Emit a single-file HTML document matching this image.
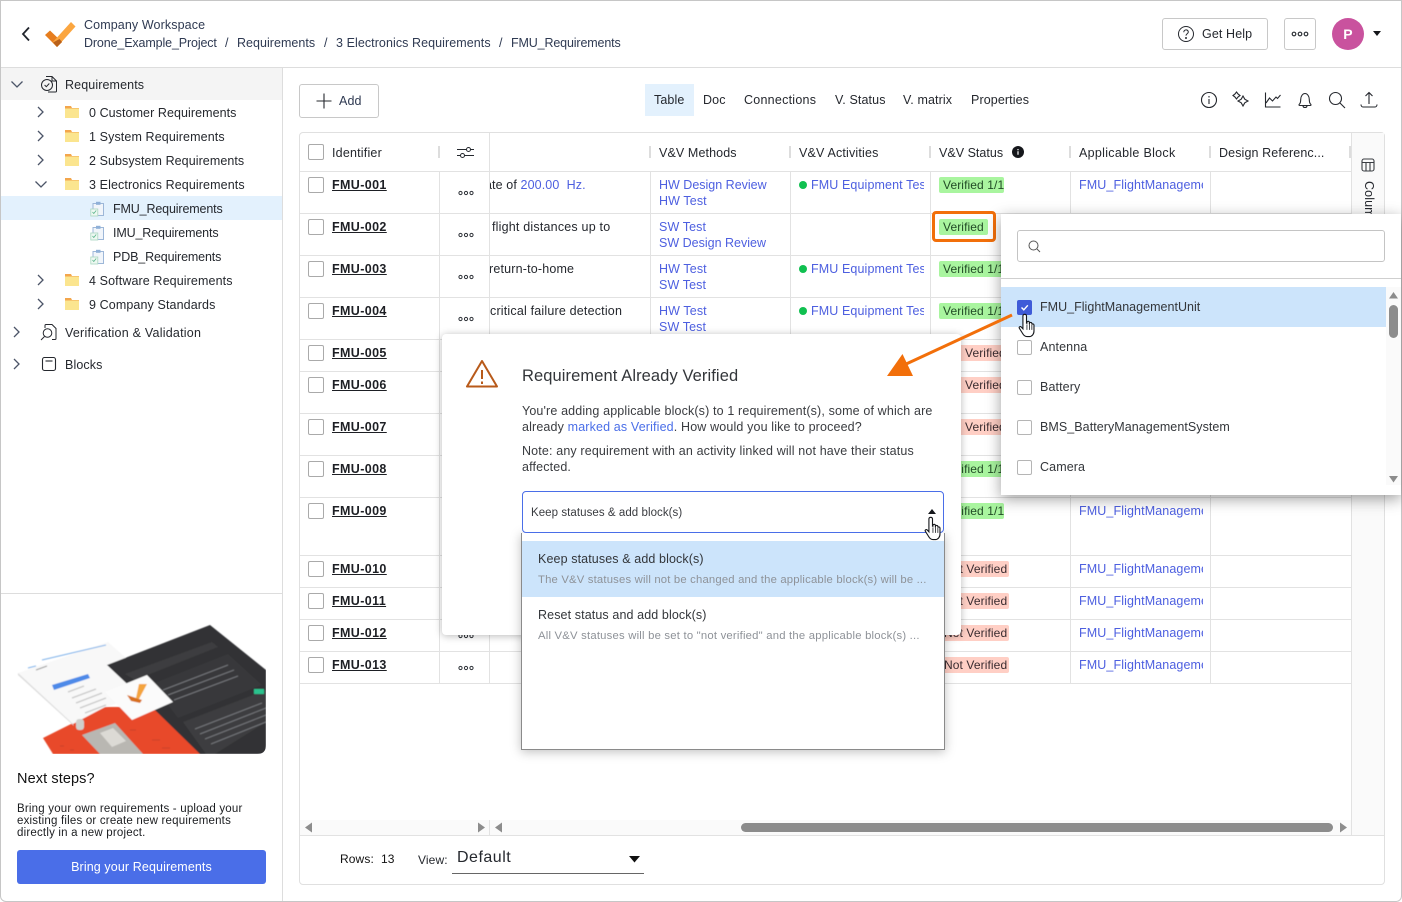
<!DOCTYPE html>
<html><head><meta charset="utf-8"><title>Requirements</title>
<style>
*{box-sizing:border-box}
html,body{margin:0;padding:0;width:1402px;height:902px;overflow:hidden;background:#fff}
body{font-family:"Liberation Sans",sans-serif;font-size:12.5px;letter-spacing:.11px;color:#25282e;position:relative}
.t{position:absolute;white-space:nowrap;line-height:16px}
.a{position:absolute}
.n{color:#2f3a52}
.b{color:#4d5fe0}
.id{font-weight:700;text-decoration:underline;left:332px;color:#1d1f24;letter-spacing:.38px}
.cb{position:absolute;left:308px;width:16px;height:16px;border:1px solid #aaa;border-radius:2px;background:#fff}
.hl{position:absolute;left:300px;width:1051px;height:1px;background:#e2e2e2}
.vl{position:absolute;width:1px;top:171px;height:513px;background:#e2e2e2}
.sep{position:absolute;width:2px;height:12px;top:146px;background:#ddd}
.dots{position:absolute;left:458px;font-size:0}
.clip{position:absolute;overflow:hidden;white-space:nowrap;line-height:16px;height:16px}
.pill{position:absolute;height:16px;line-height:16px;border-radius:2px;white-space:nowrap;overflow:hidden;padding-left:4px;font-size:12px;letter-spacing:.1px}
.g{background:#a9f59f;color:#214a25}
.r{background:#ffcfc5;color:#3a2c30}
.dot{position:absolute;left:799px;width:8px;height:8px;border-radius:50%;background:#10c050}
.cbx{position:absolute;left:1017px;width:15px;height:15px;border:1px solid #b5b5b5;border-radius:2px;background:#fff}
</style></head><body>

<!-- outer frame -->
<div class="a" style="left:0;top:0;width:1402px;height:902px;border:1px solid #c6c6c6;border-bottom-left-radius:6px;border-bottom-right-radius:6px"></div>

<!-- header -->
<div class="a" style="left:1px;top:67px;width:1400px;height:1px;background:#ddd"></div>
<svg class="a" style="left:18px;top:25px" width="16" height="18"><path d="M11 2.500 5 9l6 6.500" fill="none" stroke="#20242c" stroke-width="1.800"/></svg>
<svg class="a" style="left:40px;top:18px" width="40" height="32" viewBox="40 18 40 32"><path d="M45 35 50 30.500 62 42 57 47Z" fill="#e67d1e"/><path d="M71 22 75.500 26.500 57 47 52.500 42.500Z" fill="#fba640"/><path d="M53 42.500 59.500 39 62 42 57 47Z" fill="#b9611a"/></svg>
<div class="t n" style="left:84px;top:17px">Company Workspace</div>
<div class="t n" style="left:84px;top:35px;letter-spacing:-.13px">Drone_Example_Project</div>
<div class="t n" style="left:225px;top:35px">/</div>
<div class="t n" style="left:237px;top:35px;letter-spacing:.03px">Requirements</div>
<div class="t n" style="left:324px;top:35px">/</div>
<div class="t n" style="left:336px;top:35px;letter-spacing:.07px">3 Electronics Requirements</div>
<div class="t n" style="left:499px;top:35px">/</div>
<div class="t n" style="left:511px;top:35px;letter-spacing:-.14px">FMU_Requirements</div>

<div class="a" style="left:1162px;top:18px;width:106px;height:32px;border:1px solid #c8c8c8;border-radius:3px"></div>
<svg class="a" style="left:1177px;top:25px" width="18" height="18" fill="none" stroke="#25282e"><circle cx="9" cy="9" r="7.500"/><path d="M6.800 7.200c0-3 4.500-3 4.500-.2 0 1.800-2.300 1.700-2.300 3.600"/><circle cx="9" cy="13" r=".5" fill="#25282e"/></svg>
<div class="t" style="left:1202px;top:26px">Get Help</div>
<div class="a" style="left:1284px;top:18px;width:32px;height:32px;border:1px solid #c8c8c8;border-radius:3px"></div>
<svg class="a" style="left:1291px;top:30px" width="18" height="8" fill="none" stroke="#30343a" stroke-width="1.200"><circle cx="3" cy="4" r="1.800"/><circle cx="9" cy="4" r="1.800"/><circle cx="15" cy="4" r="1.800"/></svg>
<div class="a" style="left:1332px;top:18px;width:32px;height:32px;border-radius:50%;background:#c9529e;color:#fff;font-size:14px;font-weight:700;text-align:center;line-height:32px">P</div>
<svg class="a" style="left:1373px;top:31px" width="8" height="6"><path d="M0 0h8L4 5Z" fill="#15171b"/></svg>

<!-- sidebar -->
<div class="a" style="left:282px;top:68px;width:1px;height:833px;background:#ddd"></div>
<div class="a" style="left:1px;top:68px;width:281px;height:32px;background:#f4f4f4"></div>
<div class="a" style="left:1px;top:196px;width:281px;height:24px;background:#e3f1fd"></div>
<div class="a" style="left:1px;top:593px;width:281px;height:1px;background:#ddd"></div>

<svg class="a" style="left:10px;top:80px" width="14" height="9"><path d="M1.500 1.500 7 7l5.500-5.500" fill="none" stroke="#4c5568" stroke-width="1.300"/></svg>
<svg class="a" style="left:40px;top:75px" width="18" height="18" fill="none" stroke="#25282e" stroke-width="1"><path d="M6 1.500h6l4.500 4.500v10a1 1 0 0 1-1 1H8"/><path d="M12 1.500V6h4.500"/><circle cx="7" cy="10" r="5.500" fill="#f4f4f4"/><path d="M4.600 10l1.700 1.700 3-3.200"/></svg>
<div class="t" style="left:65px;top:77px">Requirements</div>

<svg class="a" style="left:36px;top:105px" width="10" height="14"><path d="M2 2l5 5-5 5" fill="none" stroke="#4c5568" stroke-width="1.300"/></svg>
<svg class="a" style="left:36px;top:129px" width="10" height="14"><path d="M2 2l5 5-5 5" fill="none" stroke="#4c5568" stroke-width="1.300"/></svg>
<svg class="a" style="left:36px;top:153px" width="10" height="14"><path d="M2 2l5 5-5 5" fill="none" stroke="#4c5568" stroke-width="1.300"/></svg>
<svg class="a" style="left:34px;top:180px" width="14" height="9"><path d="M1.500 1.500 7 7l5.500-5.500" fill="none" stroke="#4c5568" stroke-width="1.300"/></svg>
<svg class="a" style="left:36px;top:273px" width="10" height="14"><path d="M2 2l5 5-5 5" fill="none" stroke="#4c5568" stroke-width="1.300"/></svg>
<svg class="a" style="left:36px;top:297px" width="10" height="14"><path d="M2 2l5 5-5 5" fill="none" stroke="#4c5568" stroke-width="1.300"/></svg>
<svg class="a" style="left:12px;top:325px" width="10" height="14"><path d="M2 2l5 5-5 5" fill="none" stroke="#4c5568" stroke-width="1.300"/></svg>
<svg class="a" style="left:12px;top:357px" width="10" height="14"><path d="M2 2l5 5-5 5" fill="none" stroke="#4c5568" stroke-width="1.300"/></svg>

<svg class="a" style="left:65px;top:106px" width="14" height="12"><path d="M0 0h6l1 2h7v2H0Z" fill="#f3a64c"/><rect y="2.500" width="14" height="9.500" fill="#fbe58f"/></svg>
<svg class="a" style="left:65px;top:130px" width="14" height="12"><path d="M0 0h6l1 2h7v2H0Z" fill="#f3a64c"/><rect y="2.500" width="14" height="9.500" fill="#fbe58f"/></svg>
<svg class="a" style="left:65px;top:154px" width="14" height="12"><path d="M0 0h6l1 2h7v2H0Z" fill="#f3a64c"/><rect y="2.500" width="14" height="9.500" fill="#fbe58f"/></svg>
<svg class="a" style="left:65px;top:178px" width="14" height="12"><path d="M0 0h6l1 2h7v2H0Z" fill="#f3a64c"/><rect y="2.500" width="14" height="9.500" fill="#fbe58f"/></svg>
<svg class="a" style="left:65px;top:274px" width="14" height="12"><path d="M0 0h6l1 2h7v2H0Z" fill="#f3a64c"/><rect y="2.500" width="14" height="9.500" fill="#fbe58f"/></svg>
<svg class="a" style="left:65px;top:298px" width="14" height="12"><path d="M0 0h6l1 2h7v2H0Z" fill="#f3a64c"/><rect y="2.500" width="14" height="9.500" fill="#fbe58f"/></svg>

<div class="t" style="left:89px;top:105px;letter-spacing:.07px">0 Customer Requirements</div>
<div class="t" style="left:89px;top:129px">1 System Requirements</div>
<div class="t" style="left:89px;top:153px;letter-spacing:.07px">2 Subsystem Requirements</div>
<div class="t" style="left:89px;top:177px">3 Electronics Requirements</div>
<svg class="a" style="left:90px;top:201px" width="15" height="16" fill="none"><rect x="3" y="2.500" width="10.500" height="12" fill="#f1f5fa" stroke="#9db7d8"/><rect x="6" y=".8" width="4.500" height="3" fill="#8fb0d8"/><rect x=".8" y="8" width="7" height="7" fill="#eef8f2" stroke="#a9d6c0" stroke-width=".8"/><path d="M2.500 11l1.300 1.500 2.400-3" stroke="#5ab58b" stroke-width=".8"/></svg>
<svg class="a" style="left:90px;top:225px" width="15" height="16" fill="none"><rect x="3" y="2.500" width="10.500" height="12" fill="#f1f5fa" stroke="#9db7d8"/><rect x="6" y=".8" width="4.500" height="3" fill="#8fb0d8"/><rect x=".8" y="8" width="7" height="7" fill="#eef8f2" stroke="#a9d6c0" stroke-width=".8"/><path d="M2.500 11l1.300 1.500 2.400-3" stroke="#5ab58b" stroke-width=".8"/></svg>
<svg class="a" style="left:90px;top:249px" width="15" height="16" fill="none"><rect x="3" y="2.500" width="10.500" height="12" fill="#f1f5fa" stroke="#9db7d8"/><rect x="6" y=".8" width="4.500" height="3" fill="#8fb0d8"/><rect x=".8" y="8" width="7" height="7" fill="#eef8f2" stroke="#a9d6c0" stroke-width=".8"/><path d="M2.500 11l1.300 1.500 2.400-3" stroke="#5ab58b" stroke-width=".8"/></svg>
<div class="t" style="left:113px;top:201px;letter-spacing:-.14px">FMU_Requirements</div>
<div class="t" style="left:113px;top:225px;letter-spacing:-.14px">IMU_Requirements</div>
<div class="t" style="left:113px;top:249px;letter-spacing:-.14px">PDB_Requirements</div>
<div class="t" style="left:89px;top:273px">4 Software Requirements</div>
<div class="t" style="left:89px;top:297px">9 Company Standards</div>
<svg class="a" style="left:40px;top:323px" width="18" height="18" fill="none" stroke="#25282e" stroke-width="1"><path d="M5 5V2.500a1 1 0 0 1 1-1h6l4 4v10a1 1 0 0 1-1 1h-3"/><circle cx="7.500" cy="10" r="4.300"/><path d="M4.500 13.500 1 17"/></svg>
<div class="t" style="left:65px;top:325px;letter-spacing:.23px">Verification &amp; Validation</div>
<svg class="a" style="left:41px;top:356px" width="16" height="16" fill="none" stroke="#25282e" stroke-width="1.100"><rect x="1.500" y="1.500" width="13" height="13" rx="2"/><path d="M4.500 5h7"/></svg>
<div class="t" style="left:65px;top:357px">Blocks</div>

<!-- illustration -->
<svg class="a" style="left:17px;top:624px" width="250" height="131" viewBox="17 624 250 131">
<defs><filter id="bl" x="-5%" y="-5%" width="110%" height="110%"><feGaussianBlur stdDeviation=".55"/></filter><clipPath id="cl"><path d="M0 600H266V745Q266 754 257 754H0Z"/></clipPath></defs>
<g clip-path="url(#cl)" filter="url(#bl)">
<path d="M43 738 105 707 152 707 207 754 53 754Z" fill="#e8492a"/>
<path d="M82 735 115 723 143 754 100 754Z" fill="#b9b7b2"/>
<path d="M100 733 113 728 126 741 112 747Z" fill="#dcdad5"/>
<path d="M60 746h4M70 750h4M130 730h6M152 740h8M162 748h8" stroke="#d0452a" stroke-width="1.200"/>
<path d="M18 673 108 642 162 690 105 707 73 724Z" fill="#f8f8f8"/>
<path d="M18 673 73 724 74 726 18 675Z" fill="#dadada"/>
<path d="M52 685 88 674 90 678 54 690Z" fill="#4d8ae8"/>
<path d="M28 668 36 666M42 660 106 645" stroke="#7fb2ea" stroke-width="1.100"/>
<path d="M36 670 47 666" stroke="#999" stroke-width="1.100"/>
<path d="M68 692 84 686M72 698 96 689M76 703 102 693M80 708 106 698M85 713 106 705" stroke="#c9c9c9" stroke-width="1.300"/>
<path d="M107 665 210 625 266 670V754H200L157 712Z" fill="#313234"/>
<path d="M125 674 212 642 218 647 135 680Z" fill="#3d3e40"/>
<path d="M152 684 228 654 262 685 178 718Z" fill="#38393b"/>
<path d="M183 722 266 690V722L215 754H206Z" fill="#3d3e40"/>
<path d="M163 690 228 665M168 695 234 670M174 700 238 676M195 729 262 703M200 734 266 708M205 739 266 715M211 744 266 722" stroke="#74767a" stroke-width="1"/>
<rect x="254" y="689" width="10" height="5" fill="#2ac28e"/>
<path d="M105 692 147 675 173 702 132 720Z" fill="#fbfbfb"/>
<path d="M139 699 147 684 139 684 136 698Z" fill="#f4a43e"/>
<path d="M127 695 142 700 140 703 131 701Z" fill="#d86f1c"/>
<rect x="76" y="719" width="8" height="11" rx="3" fill="#cfcfcc"/>
</g>
</svg>
<div class="t" style="left:17px;top:771px;font-size:14.500px;letter-spacing:.1px;color:#111">Next steps?</div>
<div class="t" style="left:17px;top:803px;line-height:12px;font-size:11.500px;letter-spacing:.2px;color:#1b1d20">Bring your own requirements - upload your<br>existing files or create new requirements<br>directly in a new project.</div>
<div class="a" style="left:17px;top:850px;width:249px;height:34px;background:#4a6ee8;border-radius:3px;color:#fff;text-align:center;line-height:34px">Bring your Requirements</div>

<!-- toolbar -->
<div class="a" style="left:299px;top:84px;width:80px;height:34px;border:1px solid #c8c8c8;border-radius:3px"></div>
<svg class="a" style="left:316px;top:93px" width="16" height="16"><path d="M8 .5v15M.5 8h15" stroke="#25282e" stroke-width="1.100"/></svg>
<div class="t n" style="left:339px;top:93px">Add</div>
<div class="a" style="left:645px;top:84px;width:49px;height:32px;background:#e3f1fd"></div>
<div class="t" style="left:654px;top:92px">Table</div>
<div class="t" style="left:703px;top:92px">Doc</div>
<div class="t" style="left:744px;top:92px;letter-spacing:.25px">Connections</div>
<div class="t" style="left:835px;top:92px">V. Status</div>
<div class="t" style="left:903px;top:92px">V. matrix</div>
<div class="t" style="left:971px;top:92px">Properties</div>

<svg class="a" style="left:1200px;top:91px" width="18" height="18" fill="none" stroke="#25282e" stroke-width="1.100"><circle cx="9" cy="9" r="7.500"/><path d="M9 8v5M9 5v1.500"/></svg>
<svg class="a" style="left:1232px;top:91px" width="18" height="18" fill="none" stroke="#25282e" stroke-width="1.100"><path d="M4.500 1 6 3l2 1.500L6 6 4.500 8 3 6 1 4.500 3 3ZM11 5l1.800 3.200L16 10l-3.200 1.800L11 15l-1.800-3.200L6 10l3.200-1.800Z"/></svg>
<svg class="a" style="left:1264px;top:91px" width="18" height="18" fill="none" stroke="#25282e" stroke-width="1.100"><path d="M1.500 1.500V16h15"/><path d="M2 12 5.500 7l3 3L12 6l1.500 1.500L16.500 4"/></svg>
<svg class="a" style="left:1296px;top:91px" width="18" height="18" fill="none" stroke="#25282e" stroke-width="1.100"><path d="M3.500 13c1-1 1.200-2 1.200-4.500 0-3 1.800-6 4.300-6s4.300 3 4.300 6c0 2.500.2 3.500 1.200 4.500 1 1 .5 1.500-.5 1.500H4c-1 0-1.500-.5-.5-1.500Z"/><path d="M7 15c.3 2 3.700 2 4 0"/></svg>
<svg class="a" style="left:1328px;top:91px" width="18" height="18" fill="none" stroke="#25282e" stroke-width="1.100"><circle cx="7.500" cy="7.500" r="6"/><path d="M12 12l5 5"/></svg>
<svg class="a" style="left:1360px;top:91px" width="18" height="18" fill="none" stroke="#25282e" stroke-width="1.100"><path d="M9 13V1.500M5.500 5 9 1.500 12.500 5"/><path d="M1 13.500c0 1.500 1 2.500 2 2.500h12c1 0 2-1 2-2.500"/></svg>

<!-- table frame -->
<div class="a" style="left:299px;top:132px;width:1086px;height:753px;border:1px solid #e0e0e0;border-radius:4px"></div>
<div class="a" style="left:1351px;top:133px;width:33px;height:702px;background:#fafafa;border-left:1px solid #e2e2e2"></div>
<svg class="a" style="left:1361px;top:158px" width="14" height="14" fill="none" stroke="#3a3d42" stroke-width="1.100"><rect x="1" y="1" width="12" height="12" rx="2"/><path d="M1 4.500h12M5 4.500V13M9 4.500V13"/></svg>
<div class="t" style="left:1361px;top:181px;writing-mode:vertical-rl;color:#25282e">Columns</div>

<!-- table head -->
<div class="cb" style="top:144px"></div>
<div class="t" style="left:332px;top:145px;letter-spacing:.2px">Identifier</div>
<svg class="a" style="left:457px;top:145px" width="17" height="15" fill="none" stroke="#25282e"><path d="M0 4.500h9.500M13.500 4.500H17M0 10.500h3.500M7.500 10.500H17"/><circle cx="11.500" cy="4.500" r="2"/><circle cx="5.500" cy="10.500" r="2"/></svg>
<div class="a" style="left:489px;top:133px;width:1px;height:38px;background:#e2e2e2"></div>
<div class="sep" style="left:438px"></div><div class="sep" style="left:649px"></div><div class="sep" style="left:789px"></div><div class="sep" style="left:929px"></div><div class="sep" style="left:1069px"></div><div class="sep" style="left:1209px"></div><div class="sep" style="left:1349px"></div>
<div class="t" style="left:659px;top:145px">V&amp;V Methods</div>
<div class="t" style="left:799px;top:145px;letter-spacing:.17px">V&amp;V Activities</div>
<div class="t" style="left:939px;top:145px;letter-spacing:.02px">V&amp;V Status</div>
<svg class="a" style="left:1012px;top:146px" width="12" height="12"><circle cx="6" cy="6" r="6" fill="#15171b"/><path d="M6 5.200v3.600M6 3v1.200" stroke="#fff" stroke-width="1.200"/></svg>
<div class="t" style="left:1079px;top:145px;letter-spacing:.3px">Applicable Block</div>
<div class="t" style="left:1219px;top:145px">Design Referenc...</div>

<!-- grid lines -->
<div class="hl" style="top:171px"></div><div class="hl" style="top:213px"></div><div class="hl" style="top:255px"></div><div class="hl" style="top:297px"></div><div class="hl" style="top:339px"></div><div class="hl" style="top:371px"></div><div class="hl" style="top:413px"></div><div class="hl" style="top:455px"></div><div class="hl" style="top:497px"></div><div class="hl" style="top:555px"></div><div class="hl" style="top:587px"></div><div class="hl" style="top:619px"></div><div class="hl" style="top:651px"></div><div class="hl" style="top:683px"></div>
<div class="vl" style="left:439px"></div><div class="vl" style="left:489px"></div><div class="vl" style="left:650px"></div><div class="vl" style="left:790px"></div><div class="vl" style="left:930px"></div><div class="vl" style="left:1070px"></div><div class="vl" style="left:1210px"></div>

<!-- rows: checkboxes and ids -->
<div class="cb" style="top:177px"></div><div class="t id" style="top:177px">FMU-001</div>
<div class="cb" style="top:219px"></div><div class="t id" style="top:219px">FMU-002</div>
<div class="cb" style="top:261px"></div><div class="t id" style="top:261px">FMU-003</div>
<div class="cb" style="top:303px"></div><div class="t id" style="top:303px">FMU-004</div>
<div class="cb" style="top:345px"></div><div class="t id" style="top:345px">FMU-005</div>
<div class="cb" style="top:377px"></div><div class="t id" style="top:377px">FMU-006</div>
<div class="cb" style="top:419px"></div><div class="t id" style="top:419px">FMU-007</div>
<div class="cb" style="top:461px"></div><div class="t id" style="top:461px">FMU-008</div>
<div class="cb" style="top:503px"></div><div class="t id" style="top:503px">FMU-009</div>
<div class="cb" style="top:561px"></div><div class="t id" style="top:561px">FMU-010</div>
<div class="cb" style="top:593px"></div><div class="t id" style="top:593px">FMU-011</div>
<div class="cb" style="top:625px"></div><div class="t id" style="top:625px">FMU-012</div>
<div class="cb" style="top:657px"></div><div class="t id" style="top:657px">FMU-013</div>

<!-- action dots -->
<svg class="dots" style="top:190px" width="16" height="6" fill="none" stroke="#30343a"><circle cx="2.500" cy="3" r="1.600"/><circle cx="8" cy="3" r="1.600"/><circle cx="13.500" cy="3" r="1.600"/></svg>
<svg class="dots" style="top:232px" width="16" height="6" fill="none" stroke="#30343a"><circle cx="2.500" cy="3" r="1.600"/><circle cx="8" cy="3" r="1.600"/><circle cx="13.500" cy="3" r="1.600"/></svg>
<svg class="dots" style="top:274px" width="16" height="6" fill="none" stroke="#30343a"><circle cx="2.500" cy="3" r="1.600"/><circle cx="8" cy="3" r="1.600"/><circle cx="13.500" cy="3" r="1.600"/></svg>
<svg class="dots" style="top:316px" width="16" height="6" fill="none" stroke="#30343a"><circle cx="2.500" cy="3" r="1.600"/><circle cx="8" cy="3" r="1.600"/><circle cx="13.500" cy="3" r="1.600"/></svg>
<svg class="dots" style="top:633px" width="16" height="6" fill="none" stroke="#30343a"><circle cx="2.500" cy="3" r="1.600"/><circle cx="8" cy="3" r="1.600"/><circle cx="13.500" cy="3" r="1.600"/></svg>
<svg class="dots" style="top:665px" width="16" height="6" fill="none" stroke="#30343a"><circle cx="2.500" cy="3" r="1.600"/><circle cx="8" cy="3" r="1.600"/><circle cx="13.500" cy="3" r="1.600"/></svg>

<!-- description fragments -->
<div class="clip" style="left:490px;top:177px;width:150px"><span style="margin-left:-5px">ate of <span class="b">200.00&nbsp; Hz.</span></span></div>
<div class="clip" style="left:490px;top:219px;width:150px;letter-spacing:.2px"><span style="margin-left:2px">flight distances up to</span></div>
<div class="clip" style="left:490px;top:261px;width:150px;letter-spacing:.18px"><span style="margin-left:-1px">return-to-home</span></div>
<div class="clip" style="left:490px;top:303px;width:150px;letter-spacing:.19px">critical failure detection</div>

<!-- methods -->
<div class="t b" style="left:659px;top:177px;letter-spacing:0">HW Design Review</div><div class="t b" style="left:659px;top:193px">HW Test</div>
<div class="t b" style="left:659px;top:219px">SW Test</div><div class="t b" style="left:659px;top:235px;letter-spacing:0">SW Design Review</div>
<div class="t b" style="left:659px;top:261px">HW Test</div><div class="t b" style="left:659px;top:277px">SW Test</div>
<div class="t b" style="left:659px;top:303px">HW Test</div><div class="t b" style="left:659px;top:319px">SW Test</div>

<!-- activities -->
<div class="dot" style="top:181px"></div><div class="clip b" style="left:811px;top:177px;width:113px">FMU Equipment Test</div>
<div class="dot" style="top:265px"></div><div class="clip b" style="left:811px;top:261px;width:113px">FMU Equipment Test</div>
<div class="dot" style="top:307px"></div><div class="clip b" style="left:811px;top:303px;width:113px">FMU Equipment Test</div>

<!-- status pills -->
<div class="pill g" style="left:939px;top:177px;width:65px">Verified 1/1</div>
<div class="pill g" style="left:939px;top:219px;width:49px">Verified</div>
<div class="pill g" style="left:939px;top:261px;width:69px">Verified 1/1</div>
<div class="pill g" style="left:939px;top:303px;width:69px">Verified 1/1</div>
<div class="pill r" style="left:939px;top:345px;width:69px;padding-left:26px">Verified</div>
<div class="pill r" style="left:939px;top:377px;width:69px;padding-left:26px">Verified</div>
<div class="pill r" style="left:939px;top:419px;width:69px;padding-left:26px">Verified</div>
<div class="pill g" style="left:939px;top:461px;width:65px">Verified 1/1</div>
<div class="pill g" style="left:939px;top:503px;width:65px">Verified 1/1</div>
<div class="pill r" style="left:925px;top:561px;width:84px;padding-left:19px">Not Verified</div>
<div class="pill r" style="left:925px;top:593px;width:84px;padding-left:19px">Not Verified</div>
<div class="pill r" style="left:935px;top:625px;width:74px;padding-left:9px">Not Verified</div>
<div class="pill r" style="left:935px;top:657px;width:74px;padding-left:9px">Not Verified</div>
<div class="a" style="left:932px;top:211px;width:64px;height:31px;border:3px solid #f26f0a;border-radius:4px"></div>

<!-- applicable block -->
<div class="clip b" style="left:1079px;top:177px;width:124px">FMU_FlightManagementUnit</div>
<div class="clip b" style="left:1079px;top:503px;width:124px">FMU_FlightManagementUnit</div>
<div class="clip b" style="left:1079px;top:561px;width:124px">FMU_FlightManagementUnit</div>
<div class="clip b" style="left:1079px;top:593px;width:124px">FMU_FlightManagementUnit</div>
<div class="clip b" style="left:1079px;top:625px;width:124px">FMU_FlightManagementUnit</div>
<div class="clip b" style="left:1079px;top:657px;width:124px">FMU_FlightManagementUnit</div>

<!-- table bottom scrollbar + footer -->
<div class="a" style="left:300px;top:820px;width:1051px;height:15px;background:#fafafa"></div>
<div class="a" style="left:300px;top:835px;width:1084px;height:1px;background:#e2e2e2"></div>
<div class="a" style="left:489px;top:820px;width:1px;height:15px;background:#e2e2e2"></div>
<div class="a" style="left:741px;top:823px;width:592px;height:9px;background:#8c8c8c;border-radius:5px"></div>
<svg class="a" style="left:304px;top:822px" width="9" height="11"><path d="M8 .5v10L1 5.500Z" fill="#8c8c8c"/></svg>
<svg class="a" style="left:477px;top:822px" width="9" height="11"><path d="M1 .5v10l7-5Z" fill="#8c8c8c"/></svg>
<svg class="a" style="left:494px;top:822px" width="9" height="11"><path d="M8 .5v10L1 5.500Z" fill="#8c8c8c"/></svg>
<svg class="a" style="left:1339px;top:822px" width="9" height="11"><path d="M1 .5v10l7-5Z" fill="#8c8c8c"/></svg>
<div class="t" style="left:340px;top:851px;font-size:12px;color:#111">Rows:</div>
<div class="t" style="left:381px;top:851px;font-size:12px;color:#111">13</div>
<div class="t" style="left:418px;top:852px;font-size:12px">View:</div>
<div class="t" style="left:457px;top:850px;font-size:16px;letter-spacing:.5px">Default</div>
<svg class="a" style="left:629px;top:856px" width="11" height="7"><path d="M0 0h11L5.500 6.500Z" fill="#111"/></svg>
<div class="a" style="left:452px;top:873px;width:192px;height:1px;background:#666"></div>

<!-- modal -->
<div class="a" style="left:442px;top:334px;width:519px;height:301px;background:#fff;border-radius:4px;box-shadow:0 1px 8px rgba(0,0,0,.28)"></div>
<svg class="a" style="left:465px;top:359px" width="34" height="30" fill="none" stroke="#b85a1a" stroke-width="2" stroke-linejoin="round"><path d="M17 2 2 27.500h30Z"/><path d="M17 11v9M17 22.500v2.500"/></svg>
<div class="t" style="left:522px;top:366px;line-height:20px;font-size:16.500px;letter-spacing:.09px;color:#33363a">Requirement Already Verified</div>
<div class="t" style="left:522px;top:403px;color:#3a3c40;letter-spacing:.145px">You're adding applicable block(s) to 1 requirement(s), some of which are</div>
<div class="t" style="left:522px;top:419px;color:#3a3c40;letter-spacing:.145px">already <span style="color:#4a6ee8">marked as Verified</span>. How would you like to proceed?</div>
<div class="t" style="left:522px;top:443px;color:#3a3c40;letter-spacing:.145px">Note: any requirement with an activity linked will not have their status</div>
<div class="t" style="left:522px;top:459px;color:#3a3c40;letter-spacing:.145px">affected.</div>

<div class="a" style="left:521px;top:533px;width:424px;height:217px;background:#fff;border:1px solid #8a8a8a;border-top:0;box-shadow:0 2px 10px rgba(0,0,0,.25)"></div>
<div class="a" style="left:522px;top:491px;width:422px;height:42px;background:#fff;border:1px solid #4a6ee8;border-radius:4px"></div>
<div class="t" style="left:531px;top:505px;font-size:11.500px;letter-spacing:.06px;color:#3a3c40">Keep statuses &amp; add block(s)</div>
<svg class="a" style="left:928px;top:509px" width="8" height="5"><path d="M0 5h8L4 0Z" fill="#15171b"/></svg>
<div class="a" style="left:522px;top:541px;width:422px;height:56px;background:#cce4fb"></div>
<div class="t" style="left:538px;top:551px;color:#33363a">Keep statuses &amp; add block(s)</div>
<div class="t" style="left:538px;top:572px;font-size:11.300px;letter-spacing:.18px;color:#8e9298">The V&amp;V statuses will not be changed and the applicable block(s) will be ...</div>
<div class="t" style="left:538px;top:607px;color:#33363a">Reset status and add block(s)</div>
<div class="t" style="left:538px;top:628px;font-size:11.300px;letter-spacing:.21px;color:#8e9298">All V&amp;V statuses will be set to "not verified" and the applicable block(s) ...</div>

<!-- right dropdown panel -->
<div class="a" style="left:1001px;top:214px;width:400px;height:281px;background:#fff;box-shadow:0 4px 14px rgba(0,0,0,.38)"></div>
<div class="a" style="left:1017px;top:230px;width:368px;height:32px;border:1px solid #c4c4c4;border-radius:3px"></div>
<svg class="a" style="left:1028px;top:240px" width="13" height="13" fill="none" stroke="#555"><circle cx="5.500" cy="5.500" r="4.500"/><path d="M9 9l3 3"/></svg>
<div class="a" style="left:1001px;top:278px;width:400px;height:1px;background:#cfcfcf"></div>
<div class="a" style="left:1001px;top:287px;width:385px;height:40px;background:#cce4fb"></div>
<div class="a" style="left:1386px;top:287px;width:15px;height:198px;background:#fafafa"></div>
<svg class="a" style="left:1389px;top:292px" width="9" height="7"><path d="M0 6.500h9L4.500 0Z" fill="#8c8c8c"/></svg>
<div class="a" style="left:1389px;top:305px;width:9px;height:33px;background:#8c8c8c;border-radius:5px"></div>
<svg class="a" style="left:1389px;top:476px" width="9" height="7"><path d="M0 0h9L4.500 6.500Z" fill="#8c8c8c"/></svg>
<div class="a" style="left:1017px;top:300px;width:15px;height:15px;background:#3f5bd8;border-radius:2px"></div>
<svg class="a" style="left:1019px;top:302px" width="11" height="11"><path d="M2.500 5.500 4.800 7.800 8.800 3.300" fill="none" stroke="#fff" stroke-width="1.400"/></svg>
<div class="t" style="left:1040px;top:299px;color:#33363a;letter-spacing:.02px">FMU_FlightManagementUnit</div>
<div class="cbx" style="top:340px"></div><div class="t" style="left:1040px;top:339px;color:#33363a">Antenna</div>
<div class="cbx" style="top:380px"></div><div class="t" style="left:1040px;top:379px;color:#33363a">Battery</div>
<div class="cbx" style="top:420px"></div><div class="t" style="left:1040px;top:419px;color:#33363a;letter-spacing:.06px">BMS_BatteryManagementSystem</div>
<div class="cbx" style="top:460px"></div><div class="t" style="left:1040px;top:459px;color:#33363a">Camera</div>

<!-- orange arrow -->
<svg class="a" style="left:880px;top:305px;overflow:visible" width="140" height="80"><path d="M132 10 24 60" stroke="#f26f0a" stroke-width="3" fill="none"/><path d="M7 71 33 71 22.500 49Z" fill="#f26f0a"/></svg>

<!-- hand cursors -->
<svg class="a" style="left:1018px;top:313px" width="19" height="26" viewBox="0 0 17 23"><path d="M6 1c1 0 1.600.7 1.600 1.600V9l.4 0V8c.2-1 2-1 2.200.2V10V9c.3-1 2-1 2.200.2v1c.3-.9 1.800-.7 1.900.4V16c0 3-2 5-4.500 5H8c-2 0-3-1.200-4-3L1.200 13.500c-.6-1 .7-2 1.600-1.200L4.400 14V2.600C4.400 1.700 5 1 6 1Z" fill="#fff" stroke="#15171b" stroke-width="1"/><path d="M8 10v5M10.200 10v5M12.400 10.500V15" stroke="#15171b" stroke-width=".7"/></svg>
<svg class="a" style="left:924px;top:516px" width="19" height="26" viewBox="0 0 17 23"><path d="M6 1c1 0 1.600.7 1.600 1.600V9l.4 0V8c.2-1 2-1 2.200.2V10V9c.3-1 2-1 2.200.2v1c.3-.9 1.800-.7 1.900.4V16c0 3-2 5-4.500 5H8c-2 0-3-1.200-4-3L1.200 13.500c-.6-1 .7-2 1.600-1.200L4.400 14V2.600C4.400 1.700 5 1 6 1Z" fill="#fff" stroke="#15171b" stroke-width="1"/><path d="M8 10v5M10.200 10v5M12.400 10.500V15" stroke="#15171b" stroke-width=".7"/></svg>

</body></html>
